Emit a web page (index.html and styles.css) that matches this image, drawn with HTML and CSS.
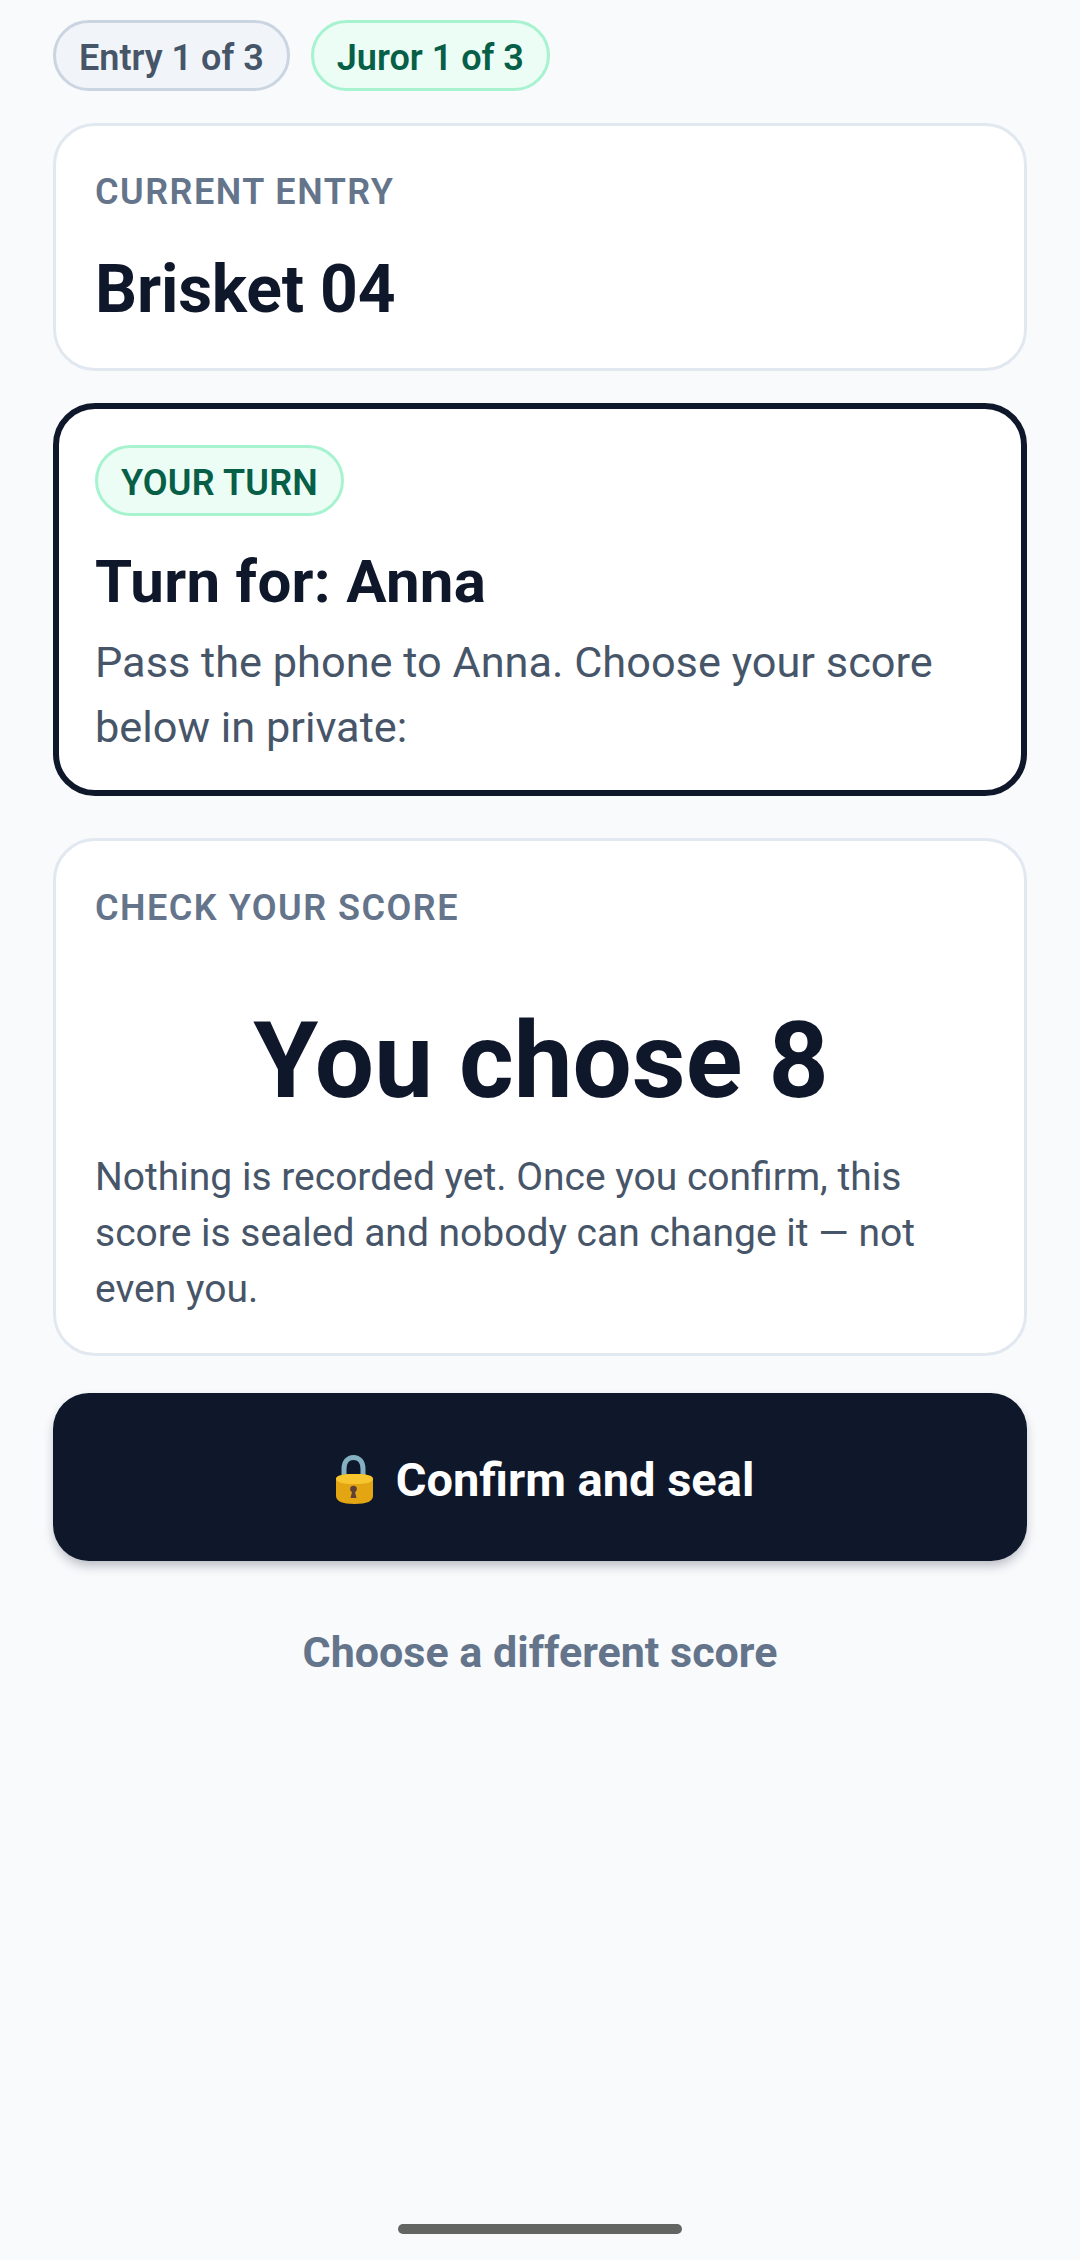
FILE: index.html
```html
<!DOCTYPE html>
<html lang="en">
<head>
    <meta charset="UTF-8">
    <meta name="viewport" content="width=device-width, initial-scale=1.0">
    <title>Confirm score</title>
    <link rel="stylesheet" href="styles.css">
</head>
<body>
    <main class="screen">
        <div class="pills">
            <span class="pill pill-gray">Entry 1 of 3</span>
            <span class="pill pill-green">Juror 1 of 3</span>
        </div>

        <section class="card card-entry">
            <p class="label">CURRENT ENTRY</p>
            <h1 class="entry-name">Brisket 04</h1>
        </section>

        <section class="card card-turn">
            <span class="pill pill-green pill-turn">YOUR TURN</span>
            <h2 class="turn-title">Turn for: Anna</h2>
            <p class="turn-text">Pass the phone to Anna. Choose your score below in private:</p>
        </section>

        <section class="card card-score">
            <p class="label">CHECK YOUR SCORE</p>
            <div class="score">You chose 8</div>
            <p class="score-text">Nothing is recorded yet. Once you confirm, this score is sealed and nobody can change it — not even you.</p>
        </section>

        <button class="btn-confirm">
            <svg class="lock" viewBox="18 17 37 49">
                <path d="M26 38V31C26 23.500 30 19.500 35.500 19.500S45 23.500 45 31v7" fill="none" stroke="#84b0c1" stroke-width="5"/>
                <path d="M18 41c0-3 5-5 18.500-5S55 38 55 41v17c0 5-6 8-18.500 8S18 63 18 58z" fill="#e3a612"/>
                <path d="M18 41c0-3 5-5 18.500-5S55 38 55 41c0 3-6 5-18.500 5S18 44 18 41z" fill="#f7c52e"/>
                <circle cx="35.500" cy="51" r="3.300" fill="#5d4037"/>
                <path d="M34.500 52h2l2 8h-6z" fill="#5d4037"/>
            </svg>
            <span>Confirm and seal</span>
        </button>

        <button class="btn-back">Choose a different score</button>
    </main>

    <div class="home-bar"></div>
</body>
</html>
```

FILE: styles.css
```css
* {
    box-sizing: border-box;
    margin: 0;
    padding: 0;
}

body {
    font-family: Roboto, sans-serif;
    background-color: #f8fafc;
    color: #0f172a;
    height: 2260px;
    overflow: hidden;
    display: flex;
    flex-direction: column;
}

.screen {
    flex: 1;
    padding: 20px 53px 0;
    display: flex;
    flex-direction: column;
}

.pills {
    display: flex;
    gap: 21px;
    margin-bottom: 32px;
}

.pill {
    display: inline-flex;
    align-items: center;
    height: 71px;
    padding: 4px 23px 0;
    border-radius: 36px;
    border: 3px solid;
    font-size: 36px;
    font-weight: 600;
}

.pill-gray {
    background: #f1f5f9;
    border-color: #cbd5e1;
    color: #475569;
}

.pill-green {
    background: #ecfdf5;
    border-color: #a7f3d0;
    color: #065f46;
}

.pill-turn {
    letter-spacing: 0.2px;
}

.card {
    background: #fff;
    border: 3px solid #e2e8f0;
    border-radius: 42px;
    padding: 42px 37px 36px 39px;
}

.card-entry {
    height: 248px;
    margin-bottom: 32px;
}

.label {
    font-size: 36px;
    line-height: 48px;
    font-weight: 600;
    letter-spacing: 1.5px;
    color: #64748b;
}

.entry-name {
    font-size: 66px;
    line-height: 78px;
    font-weight: 700;
    letter-spacing: -0.2px;
    margin-top: 35px;
}

.card-turn {
    height: 393px;
    border: 6px solid #0f172a;
    margin-bottom: 42px;
    padding: 36px 34px 33px 36px;
}

.turn-title {
    font-size: 60px;
    line-height: 72px;
    font-weight: 700;
    letter-spacing: 0.3px;
    margin-top: 30px;
}

.turn-text {
    font-size: 43.3px;
    line-height: 65px;
    color: #475569;
    margin-top: 12px;
}

.card-score {
    height: 518px;
    margin-bottom: 37px;
    padding-top: 43px;
}

.score {
    font-size: 105px;
    line-height: 128px;
    font-weight: 700;
    text-align: center;
    margin-top: 66px;
}

.score-text {
    font-size: 39px;
    line-height: 56px;
    color: #475569;
    margin-top: 23px;
}

.btn-confirm {
    height: 168px;
    padding-top: 4px;
    border: none;
    border-radius: 36px;
    background: #0f172a;
    color: #fff;
    font-family: inherit;
    font-size: 47px;
    font-weight: 700;
    box-shadow: 0 6px 12px -2px rgba(15, 23, 42, 0.3);
    display: flex;
    align-items: center;
    justify-content: center;
    gap: 23px;
}

.lock {
    width: 37px;
    height: 49px;
    margin-left: 10px;
}

.btn-back {
    border: none;
    background: none;
    font-family: inherit;
    font-size: 43px;
    font-weight: 700;
    color: #64748b;
    margin-top: 66px;
    line-height: 50px;
}

.home-bar {
    width: 284px;
    height: 10px;
    border-radius: 5px;
    background: #636563;
    margin: 0 auto 26px;
}
```
